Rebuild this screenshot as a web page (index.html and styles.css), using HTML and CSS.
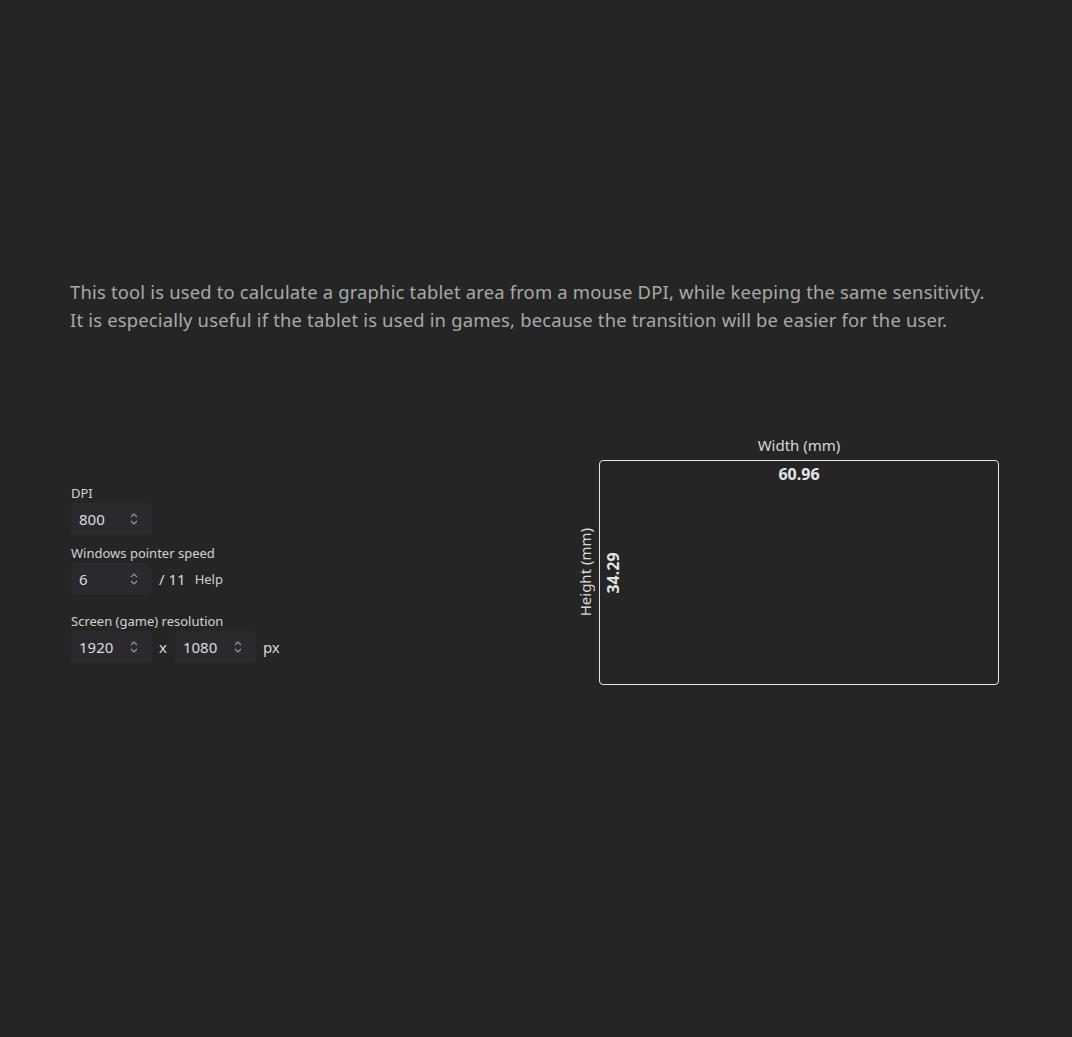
FILE: index.html
```html
<!DOCTYPE html>
<html lang="en">
<head>
<meta charset="utf-8">
<title>Tablet area calculator</title>
<link rel="stylesheet" href="styles.css">
</head>
<body>
<main class="page">
  <p class="intro">This tool is used to calculate a graphic tablet area from a mouse DPI, while keeping the same sensitivity.<br>It is especially useful if the tablet is used in games, because the transition will be easier for the user.</p>

  <section class="calc">
    <div class="form">
      <div class="field">
        <label class="label">DPI</label>
        <div class="row">
          <div class="num"><span class="val">800</span><svg class="spin" viewBox="0 0 10 14" width="10" height="14"><path d="M2 5 L5 2 L8 5 M2 9 L5 12 L8 9" fill="none" stroke="currentColor" stroke-width="1.1"/></svg></div>
        </div>
      </div>
      <div class="field">
        <label class="label">Windows pointer speed</label>
        <div class="row">
          <div class="num"><span class="val">6</span><svg class="spin" viewBox="0 0 10 14" width="10" height="14"><path d="M2 5 L5 2 L8 5 M2 9 L5 12 L8 9" fill="none" stroke="currentColor" stroke-width="1.1"/></svg></div>
          <span class="suffix">/ 11</span>
          <span class="help">Help</span>
        </div>
      </div>
      <div class="field field-wide">
        <label class="label">Screen (game) resolution</label>
        <div class="row">
          <div class="num"><span class="val">1920</span><svg class="spin" viewBox="0 0 10 14" width="10" height="14"><path d="M2 5 L5 2 L8 5 M2 9 L5 12 L8 9" fill="none" stroke="currentColor" stroke-width="1.1"/></svg></div>
          <span class="sep">x</span>
          <div class="num"><span class="val">1080</span><svg class="spin" viewBox="0 0 10 14" width="10" height="14"><path d="M2 5 L5 2 L8 5 M2 9 L5 12 L8 9" fill="none" stroke="currentColor" stroke-width="1.1"/></svg></div>
          <span class="unit">px</span>
        </div>
      </div>
    </div>

    <div class="chart">
      <div class="axis-w">Width (mm)</div>
      <div class="chart-row">
        <div class="axis-h">Height (mm)</div>
        <div class="area">
          <div class="w-val">60.96</div>
          <div class="h-val">34.29</div>
        </div>
      </div>
    </div>
  </section>
</main>
</body>
</html>
```

FILE: styles.css
```css
html, body {
  margin: 0;
  padding: 0;
  background: #252525;
}

body {
  font-family: "Noto Sans", "Open Sans", sans-serif;
  color: #d6d6d6;
}

.page {
  padding: 278px 0 0 70px;
}

.intro {
  margin: 0;
  font-size: 18.4px;
  letter-spacing: 0.19px;
  line-height: 28px;
  color: #a9a9a9;
  white-space: nowrap;
}

.calc {
  display: flex;
  align-items: flex-start;
  margin-top: 101px;
}

.form {
  flex: 0 0 504px;
  padding-top: 49px;
  padding-left: 1px;
  display: flex;
  flex-direction: column;
  gap: 9px;
}

.field-wide {
  margin-top: 8px;
}

.label {
  display: block;
  font-size: 13px;
  line-height: 18px;
  color: #d2d2d2;
  margin-bottom: 1px;
}

.row {
  display: flex;
  align-items: center;
  gap: 8px;
  height: 32px;
}

.num {
  width: 80px;
  height: 32px;
  box-sizing: border-box;
  padding: 0 12px 0 8px;
  background: #2a2a2e;
  border-radius: 4px;
  display: flex;
  align-items: center;
  justify-content: space-between;
}

.val {
  font-size: 15px;
  color: #dcdcdc;
}

.spin {
  color: #9a9a9e;
}

.suffix {
  font-size: 15px;
  color: #d8d8d8;
}

.help {
  font-size: 13px;
  color: #d0d0d0;
  margin-left: 1px;
}

.sep {
  font-size: 15px;
  color: #d8d8d8;
}

.unit {
  font-size: 15px;
  color: #d8d8d8;
}

.chart {
  display: flex;
  flex-direction: column;
  align-items: flex-end;
}

.axis-w {
  width: 400px;
  text-align: center;
  font-size: 15px;
  line-height: 20px;
  color: #d8d8d8;
  margin-bottom: 5px;
}

.chart-row {
  display: flex;
  align-items: center;
  gap: 4px;
}

.axis-h {
  writing-mode: vertical-rl;
  transform: rotate(180deg);
  font-size: 15px;
  line-height: 20px;
  color: #d8d8d8;
}

.area {
  position: relative;
  width: 400px;
  height: 225px;
  box-sizing: border-box;
  border: 1px solid #e6e6e6;
  border-radius: 4px;
}

.w-val {
  text-align: center;
  font-size: 16px;
  font-weight: 700;
  line-height: 22px;
  padding-top: 2px;
  color: #e4e4e4;
}

.h-val {
  position: absolute;
  left: 2px;
  top: 50%;
  transform: translateY(-50%) rotate(180deg);
  writing-mode: vertical-rl;
  font-size: 16px;
  font-weight: 700;
  line-height: 22px;
  color: #e4e4e4;
}
```
